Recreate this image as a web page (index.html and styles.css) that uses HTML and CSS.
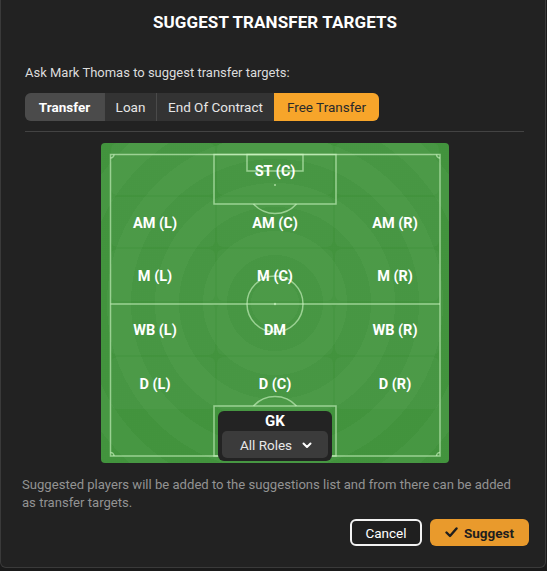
FILE: index.html
```html
<!DOCTYPE html>
<html>
<head>
<meta charset="utf-8">
<link rel="stylesheet" href="styles.css">
</head>
<body>
<div class="dialog">
  <h1 class="title">SUGGEST TRANSFER TARGETS</h1>
  <div class="top">
    <p class="prompt">Ask Mark Thomas to suggest transfer targets:</p>
    <div class="tabs">
      <div class="tab tab-transfer tab-active">Transfer</div>
      <div class="tab tab-loan">Loan</div>
      <div class="tab tab-eoc">End Of Contract</div>
      <div class="tab tab-free tab-selected">Free Transfer</div>
    </div>
    <div class="rule"></div>
  </div>
  <div class="pitch-wrap">
    <div class="pitch">
      <svg class="markings" width="348" height="320" viewBox="0 0 348 320">
        <g fill="rgba(255,255,255,0.03)">
          <rect x="10" y="0" width="104" height="52" rx="6"/>
          <rect x="116" y="0" width="116" height="52" rx="6"/>
          <rect x="234" y="0" width="104" height="52" rx="6"/>
          <rect x="10" y="54" width="104" height="50" rx="6"/>
          <rect x="116" y="54" width="116" height="50" rx="6"/>
          <rect x="234" y="54" width="104" height="50" rx="6"/>
          <rect x="10" y="106" width="104" height="52" rx="6"/>
          <rect x="116" y="106" width="116" height="52" rx="6"/>
          <rect x="234" y="106" width="104" height="52" rx="6"/>
          <rect x="10" y="160" width="104" height="52" rx="6"/>
          <rect x="116" y="160" width="116" height="52" rx="6"/>
          <rect x="234" y="160" width="104" height="52" rx="6"/>
          <rect x="10" y="214" width="104" height="52" rx="6"/>
          <rect x="116" y="214" width="116" height="52" rx="6"/>
          <rect x="234" y="214" width="104" height="52" rx="6"/>
        </g>
        <g fill="none" stroke="rgba(205,245,195,0.62)" stroke-width="1.5">
          <rect x="9.5" y="11.5" width="329.5" height="301.5"/>
          <line x1="9.5" y1="161" x2="339" y2="161"/>
          <circle cx="174" cy="161" r="28"/>
          <rect x="113" y="11.5" width="122" height="49.5"/>
          <rect x="146" y="11.5" width="56" height="16.5"/>
          <path d="M152.5 61 A29 29 0 0 0 195.5 61"/>
          <rect x="113" y="263" width="122" height="50"/>
          <rect x="146" y="296" width="56" height="17"/>
          <path d="M152.5 263 A29 29 0 0 1 195.5 263"/>
          <path d="M9.5 15 A3.5 3.5 0 0 0 13 11.5"/>
          <path d="M335.5 11.5 A3.5 3.5 0 0 0 339 15"/>
          <path d="M13 313 A3.5 3.5 0 0 0 9.5 309.5"/>
          <path d="M339 309.5 A3.5 3.5 0 0 0 335.5 313"/>
        </g>
        <g fill="rgba(205,245,195,0.7)">
          <circle cx="174" cy="161" r="1.2"/>
          <circle cx="174" cy="42" r="1"/>
          <circle cx="174" cy="282" r="1"/>
        </g>
      </svg>
      <div class="positions">
        <span class="pos c2">ST (C)</span>
        <span class="pos c1">AM (L)</span>
        <span class="pos c2">AM (C)</span>
        <span class="pos c3">AM (R)</span>
        <span class="pos c1">M (L)</span>
        <span class="pos c2">M (C)</span>
        <span class="pos c3">M (R)</span>
        <span class="pos c1">WB (L)</span>
        <span class="pos c2">DM</span>
        <span class="pos c3">WB (R)</span>
        <span class="pos c1">D (L)</span>
        <span class="pos c2">D (C)</span>
        <span class="pos c3">D (R)</span>
        <div class="gk">
          <div class="gk-label">GK</div>
          <div class="gk-select">
            <span>All Roles</span>
            <svg class="chev" width="10" height="7" viewBox="0 0 10 7"><path d="M1.5 1.5 L5 5 L8.5 1.5" fill="none" stroke="#ffffff" stroke-width="2" stroke-linecap="round" stroke-linejoin="round"/></svg>
          </div>
        </div>
      </div>
    </div>
  </div>
  <p class="note">Suggested players will be added to the suggestions list and from there can be added as transfer targets.</p>
  <div class="actions">
    <button class="btn btn-cancel">Cancel</button>
    <button class="btn btn-suggest"><svg class="check" width="13" height="11" viewBox="0 0 13 11"><path d="M1.5 5.5 L5 9 L11.5 1.5" fill="none" stroke="#1e1e1e" stroke-width="2.4" stroke-linecap="round" stroke-linejoin="round"/></svg>Suggest</button>
  </div>
</div>
</body>
</html>
```

FILE: styles.css
```css
* { box-sizing: border-box; }
html, body {
  margin: 0;
  padding: 0;
  background: #1a1a1a;
}
body {
  font-family: Roboto, "Liberation Sans", sans-serif;
  color: #ffffff;
}
.dialog {
  width: 546px;
  height: 568px;
  background: #222222;
  border: 1px solid #3a3a3a;
  border-top: 0;
  border-radius: 0 0 6px 6px;
  display: flex;
  flex-direction: column;
}
.title {
  margin: 0;
  height: 44px;
  display: flex;
  align-items: center;
  justify-content: center;
  font-size: 17px;
  font-weight: 700;
  letter-spacing: 0.1px;
  color: #ffffff;
  padding-left: 4px;
}
.top {
  padding: 20px 21px 0 24px;
}
.prompt {
  margin: 0;
  font-size: 13px;
  line-height: 18px;
  color: #dcdcdc;
}
.tabs {
  margin-top: 11px;
  display: flex;
  width: 354px;
  height: 28px;
  border-radius: 6px;
  overflow: hidden;
  background: #333333;
}
.tab {
  display: flex;
  align-items: center;
  justify-content: center;
  font-size: 13.5px;
  color: #e6e6e6;
  border-left: 1px solid #4a4a4a;
}
.tab:first-child { border-left: 0; }
.tab-transfer { width: 79px; }
.tab-loan { width: 52px; }
.tab-eoc { width: 118px; }
.tab-free { width: 105px; }
.tab-active {
  background: #4b4b4b;
  color: #ffffff;
  font-weight: 700;
}
.tab-selected {
  background: #f7a52a;
  color: #2a2a2a;
  border-left: 0;
}
.rule {
  margin-top: 10px;
  height: 1px;
  background: #434343;
}
.pitch-wrap {
  display: flex;
  justify-content: center;
  padding-top: 11px;
  padding-left: 4px;
}
.pitch {
  position: relative;
  width: 348px;
  height: 320px;
  border-radius: 4px;
  background-color: #43953e;
  background-image: repeating-radial-gradient(circle at 50% 50%, rgba(255,255,255,0.022) 0 24px, rgba(0,0,0,0.012) 24px 48px);
  overflow: hidden;
}
.markings {
  position: absolute;
  left: 0;
  top: 0;
}
.positions {
  position: relative;
  display: grid;
  grid-template-columns: 100px 100px 100px;
  grid-template-rows: 52px 52px 54px 54px 54px;
  column-gap: 20px;
  justify-content: center;
  padding-top: 2px;
}
.pos {
  display: flex;
  align-items: center;
  justify-content: center;
  font-size: 14.5px;
  font-weight: 700;
  color: #ffffff;
}
.c1 { grid-column: 1; }
.c2 { grid-column: 2; }
.c3 { grid-column: 3; }
.gk {
  grid-column: 1 / 4;
  justify-self: center;
  width: 114px;
  height: 50px;
  background: #232323;
  border-radius: 6px;
  padding: 2px 4px 3px;
  display: flex;
  flex-direction: column;
  align-items: stretch;
}
.gk-label {
  height: 16px;
  display: flex;
  align-items: center;
  justify-content: center;
  font-size: 15px;
  font-weight: 700;
}
.gk-select {
  margin-top: 2px;
  height: 27px;
  border-radius: 5px;
  background: #3b3b3b;
  display: flex;
  align-items: center;
  justify-content: center;
  gap: 10px;
  font-size: 13.5px;
  color: #e8e8e8;
  padding-left: 2px;
}
.chev { margin-top: 2px; }
.note {
  margin: 13px 0 0;
  padding: 0 28px 0 21px;
  font-size: 13.1px;
  line-height: 18px;
  color: #939393;
}
.actions {
  display: flex;
  justify-content: flex-end;
  gap: 8px;
  padding: 7px 16px 0 0;
}
.btn {
  height: 27px;
  border-radius: 6px;
  font-family: Roboto, "Liberation Sans", sans-serif;
  font-size: 13.5px;
  display: flex;
  align-items: center;
  justify-content: center;
  padding: 0;
}
.btn-cancel {
  width: 72px;
  background: #1f1f1f;
  color: #ffffff;
  border: 2px solid #f2f2f2;
}
.btn-suggest {
  width: 99px;
  background: #e99a2c;
  color: #1e1e1e;
  font-weight: 700;
  border: 0;
  gap: 6px;
}
```
